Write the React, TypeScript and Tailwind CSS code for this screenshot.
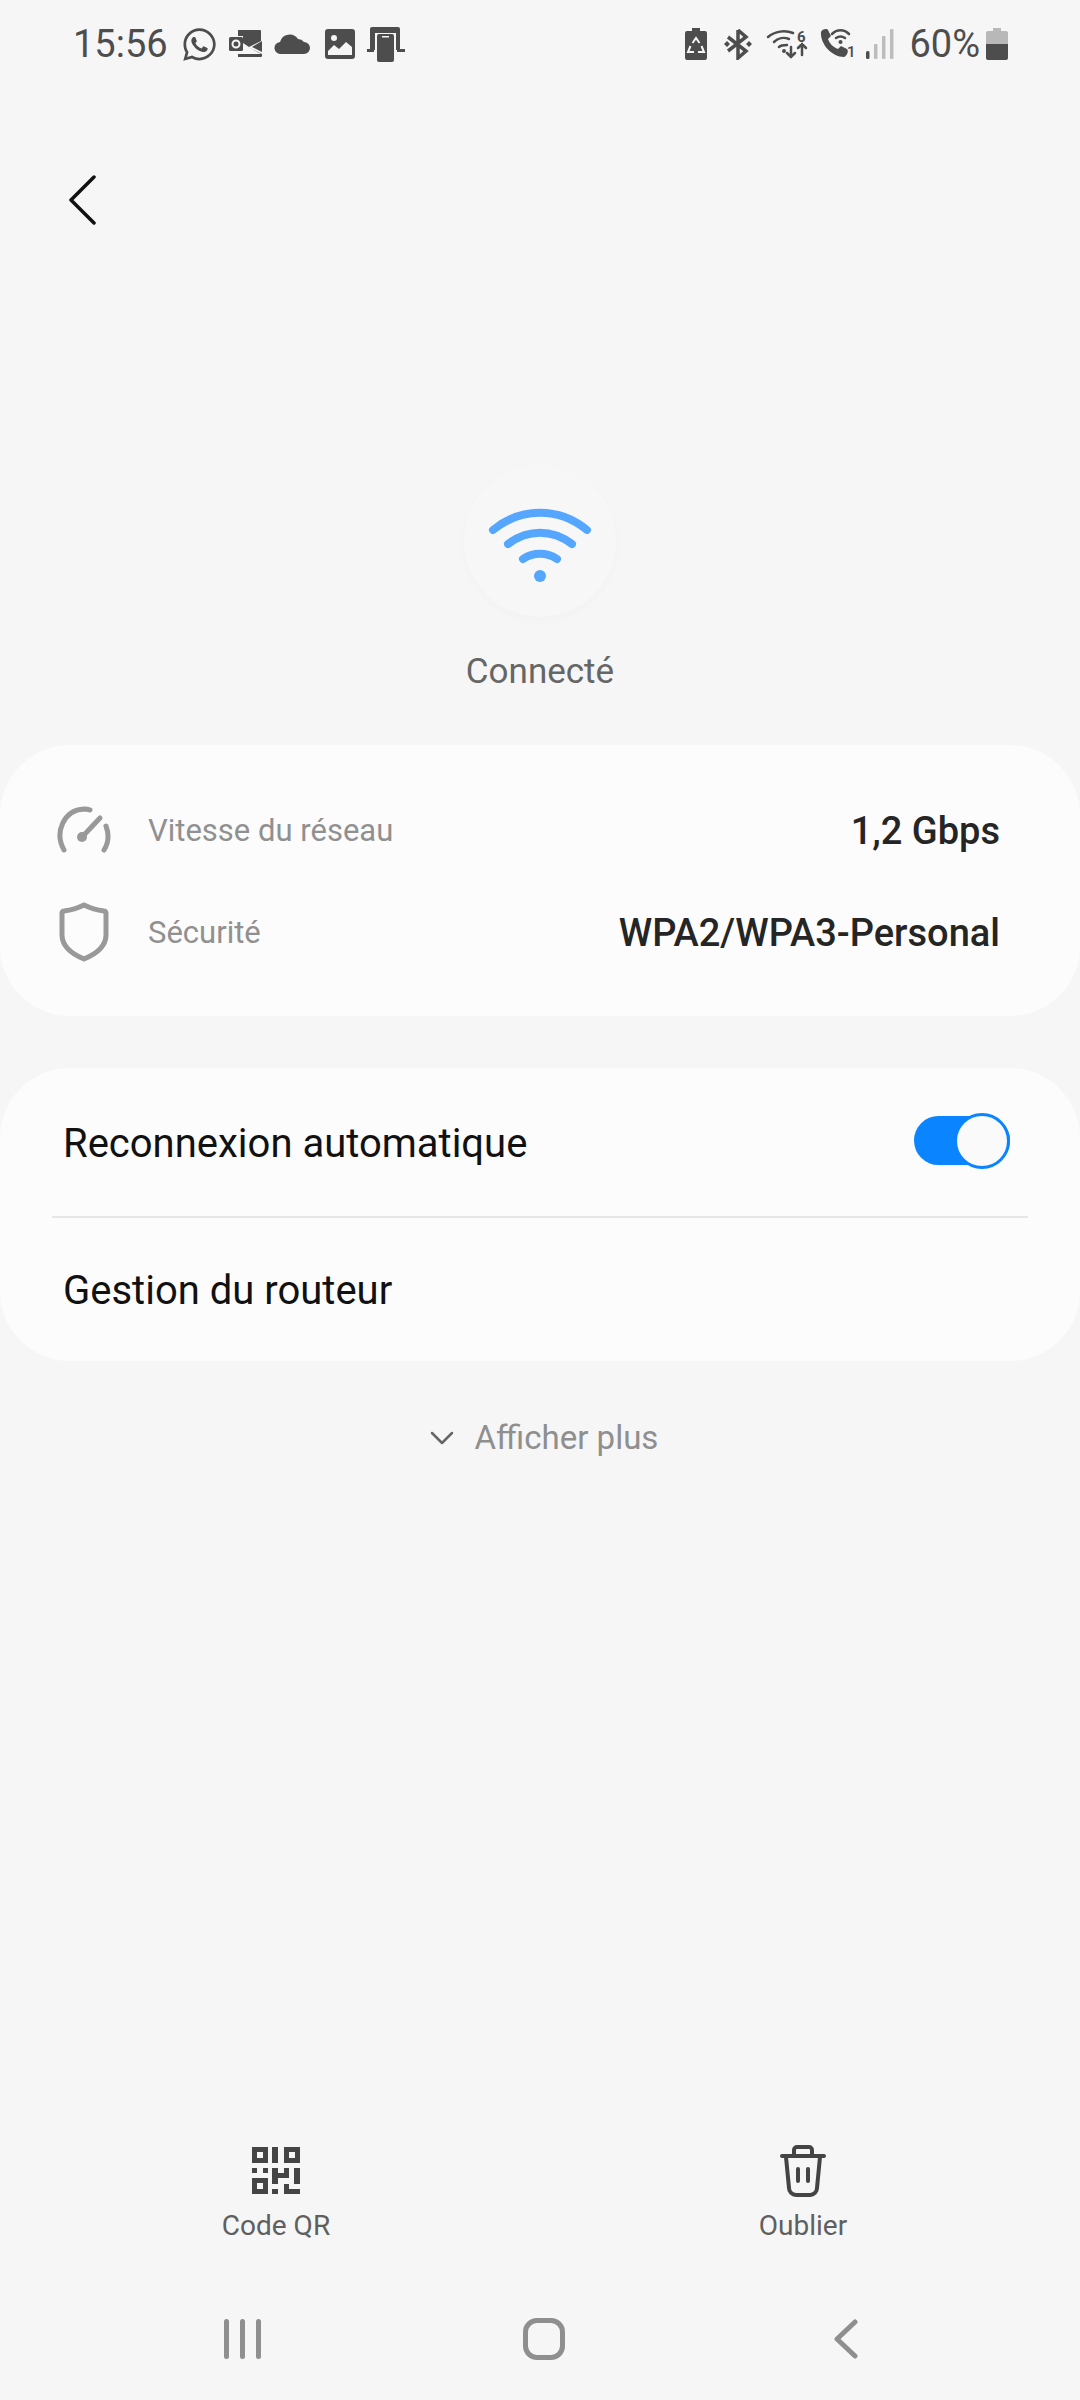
import React from 'react';
import { FaWhatsapp } from 'react-icons/fa';

const StatusBarLeft: React.FC = () => (
  <div className="flex items-center">
    <span className="text-[38px] leading-none text-[#4d4d4d]">15:56</span>
    <FaWhatsapp className="ml-[13px] w-[37px] h-[37px] text-[#4d4d4d]" />
    {/* outlook */}
    <svg className="ml-[10px] w-[36px] h-[28px]" viewBox="0 0 36 28" fill="#4d4d4d">
      <path d="M10 0h22a1 1 0 0 1 1 1v10l-12 6-6-4V6H10z" />
      <rect x="1" y="7" width="14" height="14" rx="1.500" />
      <circle cx="8" cy="14" r="3.500" fill="none" stroke="#f6f6f6" strokeWidth="2" />
      <path d="M20 17l13 7H10v3h23a1 1 0 0 0 1-1V24z" />
      <path d="M24 17l10-6v11z" />
    </svg>
    {/* cloud */}
    <svg className="ml-[10px] w-[36px] h-[20px]" viewBox="0 0 36 20" fill="#4d4d4d">
      <path d="M7 20a6 6 0 0 1-1-12 10 10 0 0 1 18-3 8 8 0 0 1 6 3 6 6 0 0 1 0 12z" />
    </svg>
    {/* image */}
    <svg className="ml-[15px] w-[30px] h-[30px]" viewBox="0 0 30 30">
      <rect width="30" height="30" rx="3" fill="#4d4d4d" />
      <circle cx="9" cy="9" r="3" fill="#f6f6f6" />
      <path d="M3 26v-4l6-6 5 4 7-7 6 5v8z" fill="#f6f6f6" />
    </svg>
    {/* phone on laptop */}
    <svg className="ml-[12px] w-[38px] h-[35px]" viewBox="0 0 38 35" fill="#4d4d4d">
      <path d="M3 23V2a2 2 0 0 1 2-2h26a2 2 0 0 1 2 2v21h-4V6H8v17z" />
      <rect x="0" y="22" width="7" height="3" />
      <rect x="30" y="22" width="8" height="3" />
      <rect x="10" y="7" width="17" height="28" rx="2" />
      <rect x="15" y="9" width="7" height="1.500" fill="#f6f6f6" />
    </svg>
  </div>
);

const StatusBarRight: React.FC = () => (
  <div className="flex items-center">
    {/* battery saver */}
    <svg className="w-[22px] h-[32px]" viewBox="0 0 22 32">
      <path d="M7 0h8v3h5a2 2 0 0 1 2 2v25a2 2 0 0 1-2 2H2a2 2 0 0 1-2-2V5a2 2 0 0 1 2-2h5z" fill="#4d4d4d" />
      <path d="M7.500 15L11 10l3.500 5M16.500 18L19 24h-6M9 24H3l2.500-6" fill="none" stroke="#f6f6f6" strokeWidth="2" />
    </svg>
    {/* bluetooth */}
    <svg className="ml-[17px] w-[28px] h-[32px]" viewBox="0 0 28 32" fill="none" stroke="#4d4d4d" strokeWidth="3.500">
      <path d="M14 2v28l8-7L4 9M14 2l8 7L4 23" />
      <path d="M0 16l3-3 3 3-3 3zM22 16l3-3 3 3-3 3z" fill="#4d4d4d" stroke="none" />
    </svg>
    {/* wifi with arrows */}
    <svg className="ml-[15px] w-[41px] h-[30px] overflow-visible" viewBox="0 0 41 30" fill="none" stroke="#4d4d4d" strokeWidth="2.500" strokeLinecap="round">
      <path d="M1 8C8 2 18 1 26 4" />
      <path d="M7 13c4-4 10-5 15-3" />
      <path d="M12 18c2-2 5-2 8-2" />
      <circle cx="17" cy="22" r="2" fill="#4d4d4d" stroke="none" />
      <path d="M24 18v10M20 24l4 4 4-4M35 26V15M31 19l4-4 4 4" />
      <text x="30" y="13" fontSize="15" fontWeight="700" fill="#4d4d4d" stroke="none" fontFamily="Roboto, sans-serif">6</text>
    </svg>
    {/* volte call */}
    <svg className="ml-[11px] w-[38px] h-[32px]" viewBox="0 0 38 32" fill="#4d4d4d">
      <path d="M2 4C3 1 8 0 9 2l3 6-3 3c2 5 5 8 10 10l3-3 6 3c2 2 0 7-3 8C13 29 1 16 2 4z" />
      <path d="M13 6c5-5 12-5 17 0M17 10c3-2 6-2 9 0" fill="none" stroke="#4d4d4d" strokeWidth="2.500" strokeLinecap="round" />
      <circle cx="21.500" cy="14" r="2" />
      <text x="28" y="29" fontSize="15" fontWeight="500" fontFamily="Roboto, sans-serif">1</text>
    </svg>
    {/* signal */}
    <svg className="ml-[9px] w-[28px] h-[30px]" viewBox="0 0 28 30">
      <rect x="0" y="22" width="3.500" height="8" rx="1.500" fill="#4d4d4d" />
      <rect x="8" y="15" width="3.500" height="15" rx="1" fill="#bdbdbd" />
      <rect x="16" y="7" width="3.500" height="23" rx="1" fill="#bdbdbd" />
      <rect x="24" y="0" width="3.500" height="30" rx="1" fill="#bdbdbd" />
    </svg>
    <span className="ml-[15px] text-[38px] leading-none text-[#4d4d4d]">60%</span>
    <svg className="ml-[6px] w-[22px] h-[32px]" viewBox="0 0 22 32">
      <path d="M7 0h8v3h5a2 2 0 0 1 2 2v11H0V5a2 2 0 0 1 2-2h5z" fill="#b8b8b8" />
      <path d="M0 16h22v14a2 2 0 0 1-2 2H2a2 2 0 0 1-2-2z" fill="#4d4d4d" />
    </svg>
  </div>
);

const WifiBadge: React.FC = () => (
  <div className="w-[152px] h-[152px] pt-[5px] rounded-full bg-[#f7f7f7] shadow-[0_3px_10px_rgba(0,0,0,0.018)] flex items-center justify-center">
    <svg className="w-[104px] h-[76px]" viewBox="0 0 104 76" fill="none" stroke="#55a6ff" strokeWidth="8" strokeLinecap="round">
      <path d="M5 24C33 1 71 1 99 24" />
      <path d="M20 38C40 23 64 23 84 38" />
      <path d="M35 53C45 46 59 46 69 53" />
      <circle cx="52" cy="70" r="6" fill="#55a6ff" stroke="none" />
    </svg>
  </div>
);

const Toggle: React.FC = () => (
  <div className="relative mb-[4px] w-[96px] h-[49px] rounded-full bg-[#0a84ff]">
    <div className="absolute right-0 top-[-3px] w-[56px] h-[56px] rounded-full bg-[#fafafa] border-[3px] border-[#0a84ff]" />
  </div>
);

const App: React.FC = () => {
  return (
    <div className="w-[1080px] h-[2400px] bg-[#f6f6f6] flex flex-col font-['Roboto',sans-serif] overflow-hidden">
      {/* Status bar */}
      <div className="h-[88px] pl-[73px] pr-[72px] flex items-center justify-between">
        <StatusBarLeft />
        <StatusBarRight />
      </div>

      {/* Back */}
      <div className="mt-[56px] h-[112px] pl-[68px] flex items-center">
        <svg className="w-[28px] h-[50px]" viewBox="0 0 28 50" fill="none" stroke="#111" strokeWidth="3.500" strokeLinecap="round" strokeLinejoin="round">
          <path d="M26 2L3 25l23 23" />
        </svg>
      </div>

      {/* Connection status */}
      <div className="mt-[209px] flex flex-col items-center">
        <WifiBadge />
        <span className="mt-[35px] text-[35px] leading-[40px] text-[#666666]">Connecté</span>
      </div>

      {/* Info card */}
      <div className="mt-[53px] h-[271px] rounded-[70px] bg-[#fcfcfc] pl-[56px] pr-[80px] flex flex-col justify-center gap-[42px]">
        <div className="flex items-center h-[60px]">
          <svg className="w-[56px] h-[48px]" viewBox="0 0 56 48" fill="none" stroke="#999" strokeWidth="5" strokeLinecap="round">
            <path d="M8 44C-2 26 8 4 28 3c2 0 4 0 6 1" />
            <path d="M48 44c5-8 5-16 2-24" />
            <path d="M27 30L44 12" />
            <circle cx="26" cy="31" r="5" fill="#999" stroke="none" />
          </svg>
          <span className="ml-[36px] pt-[3px] text-[31px] text-[#909090]">Vitesse du réseau</span>
          <span className="ml-auto pt-[3px] text-[38px] font-medium text-[#252525]">1,2 Gbps</span>
        </div>
        <div className="flex items-center h-[60px]">
          <svg className="w-[56px] h-[60px]" viewBox="0 0 56 60" fill="none" stroke="#999" strokeWidth="5" strokeLinejoin="round">
            <path d="M28 3c6 3 12 5 20 6 1 0 2 1 2 2v22c0 11-10 19-22 24C16 52 6 44 6 33V11c0-1 1-2 2-2 8-1 14-3 20-6z" />
          </svg>
          <span className="ml-[36px] pt-[3px] text-[31px] text-[#909090]">Sécurité</span>
          <span className="ml-auto pt-[3px] text-[38px] font-medium text-[#252525]">WPA2/WPA3-Personal</span>
        </div>
      </div>

      {/* Settings card */}
      <div className="mt-[52px] h-[293px] rounded-[70px] bg-[#fcfcfc] flex flex-col">
        <div className="h-[148px] pl-[63px] pr-[70px] flex items-center justify-between">
          <span className="pt-[4px] text-[40px] text-[#111111]">Reconnexion automatique</span>
          <Toggle />
        </div>
        <div className="mx-[52px] h-[2px] bg-[#e6e6e6]" />
        <div className="flex-1 pl-[63px] flex items-center">
          <span className="pt-[2px] text-[40px] text-[#111111]">Gestion du routeur</span>
        </div>
      </div>

      {/* Show more */}
      <div className="mt-[57px] pl-[8px] flex items-center justify-center">
        <svg className="w-[24px] h-[14px]" viewBox="0 0 24 14" fill="none" stroke="#666" strokeWidth="2.500" strokeLinecap="round" strokeLinejoin="round">
          <path d="M2 2l10 10L22 2" />
        </svg>
        <span className="ml-[21px] text-[33px] leading-[40px] text-[#8f8f8f]">Afficher plus</span>
      </div>

      {/* Bottom actions */}
      <div className="mt-auto mb-[34px] flex">
        <div className="w-[552px] flex flex-col items-center">
          <div className="h-[52px] flex items-center">
            <svg className="w-[48px] h-[48px]" viewBox="0 0 48 48" fill="#444">
              <path fillRule="evenodd" d="M0 0h16v16H0zM5 5v6h6V5zM20 0h6v16h-6zM32 0h16v16H32zM37 5v6h6V5z" />
              <path fillRule="evenodd" d="M0 21h5v5H0zM11 21h5v5h-5zM0 31h16v16H0zM5 36v6h6v-6z" />
              <path d="M20 21h6v5h6v-5h5v10H26v6h-6zM42 21h6v16h-6zM20 42h6v5h-6zM32 37h5v5h11v5H32z" />
            </svg>
          </div>
          <span className="mt-[11px] text-[28px] leading-[36px] text-[#5f5f5f]">Code QR</span>
        </div>
        <div className="w-[502px] flex flex-col items-center">
          <svg className="w-[46px] h-[52px]" viewBox="0 0 46 52" fill="none" stroke="#444" strokeWidth="4" strokeLinecap="round" strokeLinejoin="round">
            <path d="M2 11h42" />
            <path d="M14 11V5a3 3 0 0 1 3-3h12a3 3 0 0 1 3 3v6" />
            <path d="M6 12l3 31a7 7 0 0 0 7 7h14a7 7 0 0 0 7-7l3-31" />
            <path d="M18 24v12M28 24v12" />
          </svg>
          <span className="mt-[11px] text-[28px] leading-[36px] text-[#5f5f5f]">Oublier</span>
        </div>
      </div>

      {/* Navigation bar */}
      <div className="h-[122px] pl-[91px] grid grid-cols-[302px_302px_302px] items-center justify-items-center">
        <div className="flex gap-[11px]">
          <div className="w-[5px] h-[40px] rounded-full bg-[#8f8f8f]" />
          <div className="w-[5px] h-[40px] rounded-full bg-[#8f8f8f]" />
          <div className="w-[5px] h-[40px] rounded-full bg-[#8f8f8f]" />
        </div>
        <div className="w-[42px] h-[42px] rounded-[14px] border-[5px] border-[#8f8f8f]" />
        <svg className="w-[24px] h-[40px]" viewBox="0 0 24 40" fill="none" stroke="#8f8f8f" strokeWidth="5" strokeLinecap="round" strokeLinejoin="round">
          <path d="M21 3L3 20l18 17" />
        </svg>
      </div>
    </div>
  );
};

export default App;
